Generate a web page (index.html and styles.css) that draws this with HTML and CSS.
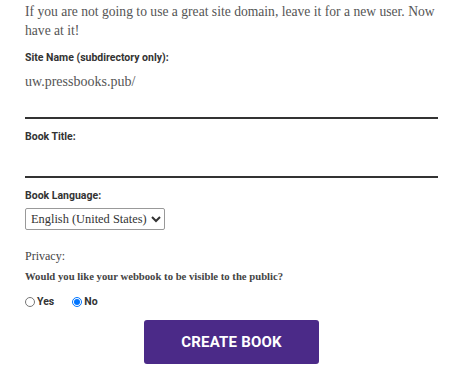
FILE: index.html
```html
<!DOCTYPE html>
<html lang="en">
<head>
    <meta charset="UTF-8">
    <meta name="viewport" content="width=device-width, initial-scale=1.0">
    <title>Create Book</title>
    <link rel="stylesheet" href="styles.css">
</head>
<body>
    <form class="signup-form">
        <p class="intro">If you are not going to use a great site domain, leave it for a new user. Now have at it!</p>

        <label class="field-label" for="blogname">Site Name (subdirectory only):</label>
        <div class="prefix">uw.pressbooks.pub/</div>
        <input class="line-input" type="text" id="blogname">

        <label class="field-label" for="blog_title">Book Title:</label>
        <input class="line-input short" type="text" id="blog_title">

        <label class="field-label" for="site-language">Book Language:</label>
        <select class="lang-select" id="site-language">
            <option>English (United States)</option>
        </select>

        <div class="privacy">
            <p class="privacy-title">Privacy:</p>
            <p class="privacy-question">Would you like your webbook to be visible to the public?</p>
            <div class="radio-row">
                <label class="radio"><input type="radio" name="blog_public" value="1"> Yes</label>
                <label class="radio"><input type="radio" name="blog_public" value="0" checked> No</label>
            </div>
        </div>

        <div class="submit-row">
            <button type="button" class="create-button">CREATE BOOK</button>
        </div>
    </form>
</body>
</html>
```

FILE: styles.css
```css
body {
    margin: 0;
    background-color: #ffffff;
    font-family: 'Liberation Serif', serif;
    color: #444;
}
.signup-form {
    width: 413px;
    padding: 2px 25px 0 25px;
    display: flex;
    flex-direction: column;
}
.intro {
    margin: 0;
    font-size: 13.6px;
    line-height: 19px;
    color: #555;
}
.field-label {
    font-family: 'Roboto', sans-serif;
    font-weight: 700;
    font-size: 10.5px;
    color: #333;
    margin-top: 11px;
}
.prefix {
    margin-top: 10px;
    font-size: 14px;
    color: #555;
}
.line-input {
    border: none;
    border-bottom: 2px solid #333;
    height: 26px;
    padding: 0;
    margin: 0;
    margin-top: 1px;
    width: 100%;
    outline: none;
}
.line-input.short {
    height: 31px;
    margin-top: 2px;
}
.lang-select {
    align-self: flex-start;
    margin-top: 6px;
    height: 22px;
    font-family: 'Liberation Serif', serif;
    font-size: 12.4px;
    color: #333;
    border: 1px solid #999;
    border-radius: 2px;
    background: #fff;
    padding: 0 1px;
}
.privacy {
    margin-top: 19px;
}
.privacy-title {
    margin: 0;
    font-size: 12px;
    color: #444;
}
.privacy-question {
    margin: 6px 0 0 0;
    font-size: 10.7px;
    font-weight: 700;
    color: #444;
}
.radio-row {
    display: flex;
    gap: 18px;
    margin-top: 13px;
}
.radio {
    font-family: 'Roboto', sans-serif;
    font-weight: 700;
    font-size: 10.5px;
    color: #333;
    display: flex;
    align-items: center;
    gap: 2px;
}
.radio input {
    margin: 0;
    width: 10px;
    height: 10px;
}
.submit-row {
    display: flex;
    justify-content: center;
    margin-top: 12px;
}
.create-button {
    width: 175px;
    height: 44px;
    background-color: #4b2a88;
    color: #fff;
    border: none;
    border-radius: 3px;
    font-family: 'Roboto', sans-serif;
    font-weight: 700;
    font-size: 15px;
    letter-spacing: 0.2px;
}
```
